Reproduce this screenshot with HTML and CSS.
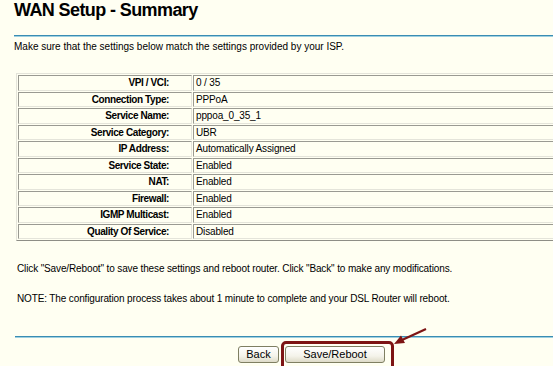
FILE: index.html
```html
<!DOCTYPE html>
<html>
<head>
<meta charset="utf-8">
<title>WAN Setup - Summary</title>
<link rel="stylesheet" href="styles.css">
</head>
<body>
<div class="page">
  <h1 class="title">WAN Setup - Summary</h1>
  <div class="rule"></div>
  <p class="intro">Make sure that the settings below match the settings provided by your ISP.</p>
  <table class="summary">
    <tr><td class="label">VPI / VCI:</td><td class="value">0 / 35</td></tr>
    <tr><td class="label">Connection Type:</td><td class="value">PPPoA</td></tr>
    <tr><td class="label">Service Name:</td><td class="value">pppoa_0_35_1</td></tr>
    <tr><td class="label">Service Category:</td><td class="value">UBR</td></tr>
    <tr><td class="label">IP Address:</td><td class="value">Automatically Assigned</td></tr>
    <tr><td class="label">Service State:</td><td class="value">Enabled</td></tr>
    <tr><td class="label">NAT:</td><td class="value">Enabled</td></tr>
    <tr><td class="label">Firewall:</td><td class="value">Enabled</td></tr>
    <tr><td class="label">IGMP Multicast:</td><td class="value">Enabled</td></tr>
    <tr><td class="label">Quality Of Service:</td><td class="value">Disabled</td></tr>
  </table>
  <p class="note first">Click "Save/Reboot" to save these settings and reboot router. Click "Back" to make any modifications.</p>
  <p class="note">NOTE: The configuration process takes about 1 minute to complete and your DSL Router will reboot.</p>
  <div class="rule bottom-rule"></div>
  <div class="actions">
    <button class="btn btn-back">Back</button>
    <button class="btn btn-save">Save/Reboot</button>
  </div>
</div>
<div class="highlight"></div>
<svg class="arrow" width="553" height="366" viewBox="0 0 553 366">
  <line x1="426" y1="329" x2="402" y2="340" stroke="#7d1414" stroke-width="2.2"/>
  <polygon points="394,344 401,335.5 405,343" fill="#7d1414"/>
</svg>
</body>
</html>
```
FILE: styles.css
```css
html, body {
  margin: 0;
  padding: 0;
  background: #fffff2;
  overflow: hidden;
}
body {
  width: 553px;
  height: 366px;
  position: relative;
  font-family: "Liberation Sans", Arial, sans-serif;
  color: #000;
}
.page {
  padding-left: 14px;
}
.title {
  margin: 0;
  font-size: 18px;
  line-height: 21px;
  font-weight: bold;
  letter-spacing: -0.6px;
  color: #000;
}
.rule {
  margin-top: 14px;
  height: 0;
  border-top: 1px solid #3a8db3;
  border-bottom: 1px solid #9fd0e0;
}
.intro {
  margin: 4px 0 0 0;
  font-size: 10px;
  line-height: 12px;
  letter-spacing: 0;
}
.summary {
  margin: 20px 0 0 2px;
  width: 570px;
  border-collapse: separate;
  border-spacing: 1px;
  border: 1px solid;
  border-color: #e4e4da #8e8e86 #8e8e86 #e4e4da;
  font-size: 10px;
}
.summary td {
  border: 1px solid;
  border-color: #9a9a92 #e4e4da #e4e4da #9a9a92;
  line-height: 13.5px;
  padding: 0;
  white-space: nowrap;
}
.summary .label {
  width: 150px;
  text-align: right;
  font-weight: bold;
  letter-spacing: -0.4px;
  padding-right: 22px;
}
.summary .value {
  padding-left: 2px;
  letter-spacing: -0.15px;
}
.note {
  margin: 22px 0 0 3px;
  font-size: 10px;
  line-height: 12px;
  letter-spacing: -0.13px;
}
.note + .note {
  margin-top: 18px;
}
.bottom-rule {
  margin-top: 31px;
  margin-left: 1px;
}
.actions {
  display: flex;
  gap: 6px;
  margin-top: 8px;
  padding-left: 224px;
}
.btn {
  height: 17px;
  padding: 0;
  border: 1px solid #7f7f62;
  border-radius: 3px;
  background: linear-gradient(#ffffff, #f4f3ea 60%, #dedbc8);
  font-family: "Liberation Sans", Arial, sans-serif;
  font-size: 11px;
  line-height: 15px;
  color: #000;
}
.btn-back {
  width: 41px;
}
.btn-save {
  width: 100px;
}
.highlight {
  position: absolute;
  left: 281px;
  top: 341px;
  width: 107px;
  height: 28px;
  border: 3px solid #7d1414;
  border-radius: 5px;
}
.arrow {
  position: absolute;
  left: 0;
  top: 0;
}
```
